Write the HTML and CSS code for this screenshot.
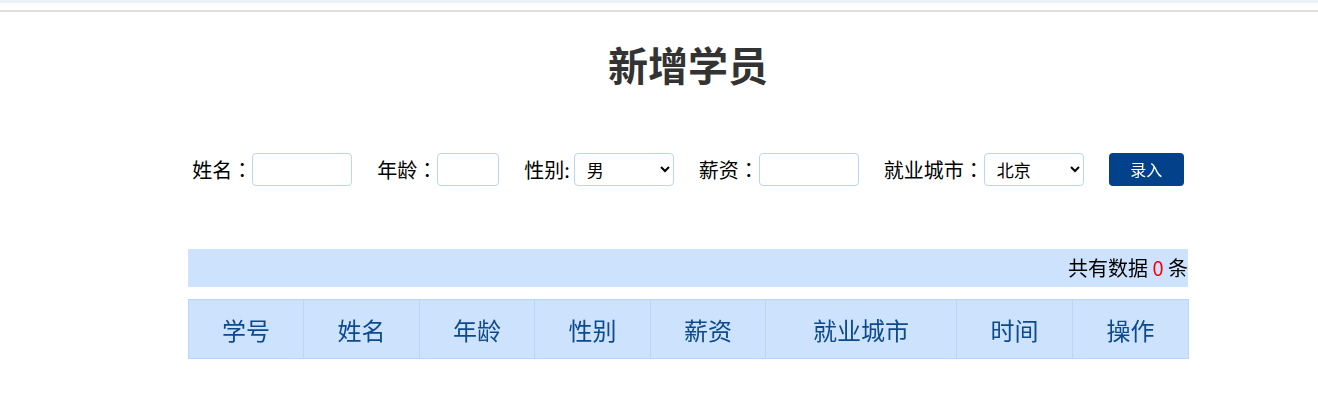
FILE: index.html
```html
<!DOCTYPE html>
<html lang="zh-CN">
<head>
  <meta charset="UTF-8" />
  <meta name="viewport" content="width=device-width, initial-scale=1.0" />
  <title>新增学员</title>
  <link rel="stylesheet" href="styles.css">
</head>
<body>
  <div class="top-strip"></div>
  <div class="top-line"></div>

  <div class="container">
    <h1 class="title">新增学员</h1>

    <form class="info-form" onsubmit="return false">
      <div class="field">
        <label for="uname">姓名<span class="colon" lang="zh-TW">：</span></label>
        <input id="uname" class="text-input name-input" type="text" autofocus>
      </div>
      <div class="field">
        <label for="age">年龄<span class="colon" lang="zh-TW">：</span></label>
        <input id="age" class="text-input age-input" type="text">
      </div>
      <div class="field">
        <label for="gender" class="half-colon">性别:</label>
        <select id="gender" class="select-input">
          <option>男</option>
          <option>女</option>
        </select>
      </div>
      <div class="field">
        <label for="salary">薪资<span class="colon" lang="zh-TW">：</span></label>
        <input id="salary" class="text-input" type="text">
      </div>
      <div class="field">
        <label for="city">就业城市<span class="colon" lang="zh-TW">：</span></label>
        <select id="city" class="select-input">
          <option>北京</option>
          <option>上海</option>
          <option>广州</option>
          <option>深圳</option>
        </select>
      </div>
      <button class="submit-btn" type="submit">录入</button>
    </form>

    <div class="count-bar">共有数据 <span class="count">0</span> 条</div>

    <table class="stu-table">
      <colgroup>
        <col style="width:115px">
        <col style="width:116px">
        <col style="width:115px">
        <col style="width:116px">
        <col style="width:115px">
        <col style="width:191px">
        <col style="width:116px">
        <col style="width:116px">
      </colgroup>
      <thead>
        <tr>
          <th>学号</th>
          <th>姓名</th>
          <th>年龄</th>
          <th>性别</th>
          <th>薪资</th>
          <th>就业城市</th>
          <th>时间</th>
          <th>操作</th>
        </tr>
      </thead>
      <tbody></tbody>
    </table>
  </div>
</body>
</html>
```

FILE: styles.css
```css
* {
  box-sizing: border-box;
  margin: 0;
  padding: 0;
}

body {
  background: #fff;
  font-family: "Microsoft YaHei", "Noto Sans CJK SC", "Noto Sans", sans-serif;
  color: #000;
}

.top-strip {
  height: 3px;
  background: #eaf1fb;
}

.top-line {
  height: 2px;
  margin-top: 7px;
  background: #dedede;
}

.container {
  width: 1000px;
  margin: 0 0 0 188px;
}

.title {
  margin-top: 32px;
  text-align: center;
  font-size: 40px;
  line-height: 40px;
  font-weight: 700;
  color: #333;
}

.info-form {
  display: flex;
  justify-content: center;
  align-items: center;
  gap: 25px;
  margin-top: 69px;
  height: 33px;
}

.field {
  display: flex;
  align-items: center;
}

.field label {
  font-size: 20px;
  white-space: nowrap;
}

/* centred full-width colon, like YaHei draws it */
.colon {
  font-family: "Noto Sans CJK TC", "Noto Sans CJK SC", sans-serif;
}

.half-colon {
  margin-right: 4px;
}

.text-input,
.select-input {
  width: 100px;
  height: 33px;
  border: 1px solid #b8d6f8;
  border-radius: 4px;
  background: #fff;
  font-family: inherit;
  font-size: 17px;
  outline: none;
}

.text-input {
  padding: 0 6px;
}

.age-input {
  width: 62px;
}

.select-input {
  padding: 0 4px 0 8px;
  color: #000;
}

.submit-btn {
  width: 75px;
  height: 33px;
  margin-bottom: 1px;
  border: none;
  border-radius: 4px;
  background: #03428a;
  color: #fff;
  font-family: inherit;
  font-size: 16px;
  cursor: pointer;
}

.count-bar {
  margin-top: 63px;
  height: 38px;
  line-height: 38px;
  background: #cde2fc;
  text-align: right;
  font-size: 20px;
}

.count {
  color: #f00;
}

.stu-table {
  width: 1000px;
  margin-top: 12px;
  border-collapse: collapse;
  table-layout: fixed;
}

.stu-table th {
  height: 59px;
  background: #cde2fc;
  border: 1px solid #b6d7fb;
  color: #0c4a8d;
  font-size: 24px;
  font-weight: 400;
  text-align: center;
}
```
